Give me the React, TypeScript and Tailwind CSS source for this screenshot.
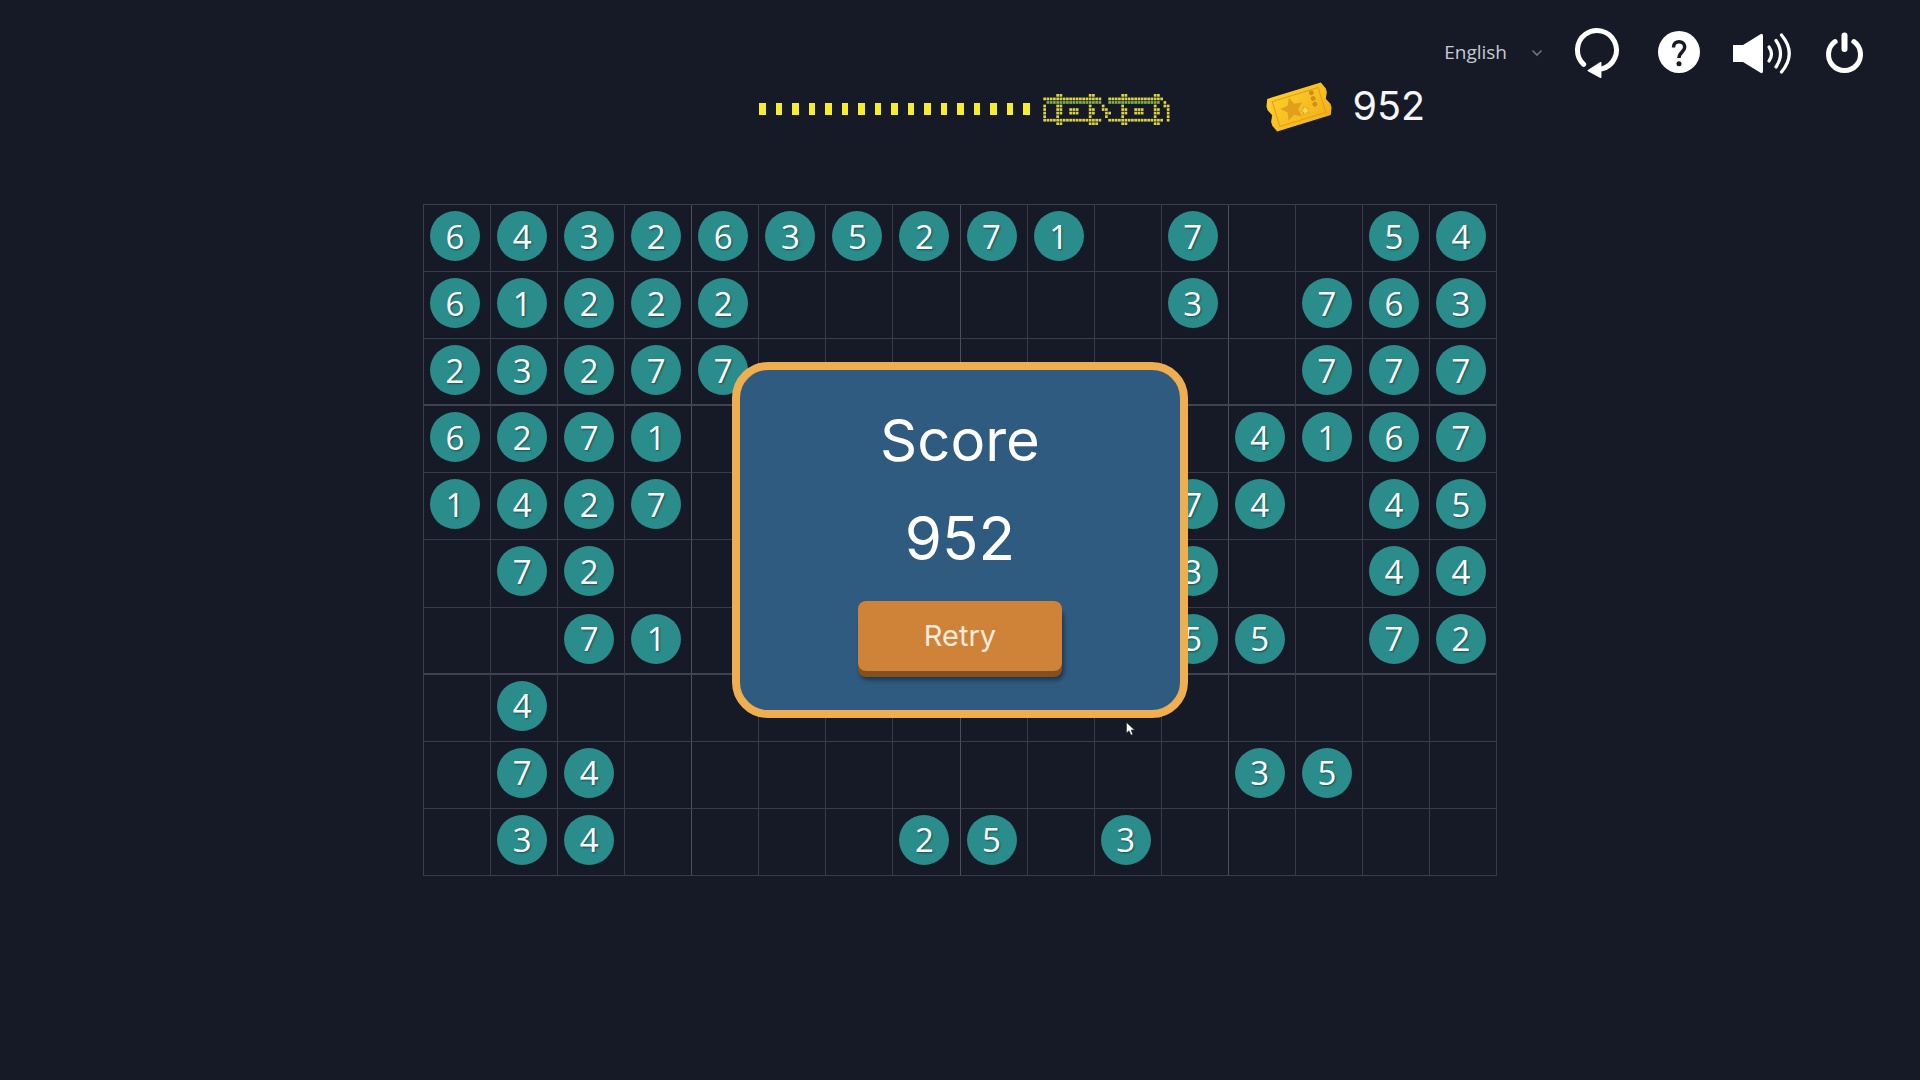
const board = [
  '6432635271x7xx54',
  '61222xxxxxx3x763',
  '23277xxxxxxxx777',
  '6271xxxxxxxx4167',
  '1427xxxxxxx74x45',
  'x72xxxxxxxx3xx44',
  'xx71xxxxxxx55x72',
  'x4xxxxxxxxxxxxxx',
  'x74xxxxxxxxx35xx',
  'x34xxxx25x3xxxxx',
];

const dotRows = [
  '....##........##........##........##...',
  '##################..#################..',
  '.ggggggggggggggggg..gggggggggggggggg.#.',
  '#...##........#...#.....#.........#..##',
  '#...##..###...##..##....##..###...##..#',
  '#...##..###...##...##...##..###...##..#',
  '#...#.........#....#....#.........#...#',
  '##################..#################.#',
  '....##........###.......##........##...',
];

function DotBadge() {
  return (
    <svg width="128" height="32" viewBox="0 0 128 32" className="ml-[13px]">
      {dotRows.map((row, y) =>
        row.split('').map((c, x) =>
          c === '.' ? null : (
            <rect
              key={`${x}-${y}`}
              x={x * 3.25 + 0.3}
              y={y * 3.55 + 1}
              width="2.7"
              height="2.7"
              fill={c === 'g' ? '#7fb050' : '#dcd540'}
            />
          ),
        ),
      )}
    </svg>
  );
}

function Ticket() {
  return (
    <svg width="70" height="50" viewBox="0 0 70 50">
      <defs>
        <linearGradient id="tk" x1="0" y1="0" x2="1" y2="1">
          <stop offset="0" stopColor="#fdd02c" />
          <stop offset="1" stopColor="#f3b01a" />
        </linearGradient>
      </defs>
      <g transform="rotate(-17 35 25)">
        <path d="M7 8H63L66 15V19L63 25L66 31V35L63 42H7L4 35V31L7 25L4 19V15Z" fill="url(#tk)" />
        <path d="M11 12H59V38H11Z" fill="none" stroke="#e3a31a" strokeWidth="1.2" />
        <path
          d="M28 13L31.5 20.5L39.5 21.5L33.5 27L35 35L28 31L21 35L22.5 27L16.5 21.5L24.5 20.5Z"
          fill="#e0a01e"
        />
        <path d="M40 25.5L41.5 28.5L44.5 29L42.3 31L43 34L40 32.5L37 34L37.7 31L35.5 29L38.5 28.5Z" fill="#ffd95f" stroke="#e3a31a" strokeWidth="0.8" />
        <circle cx="51" cy="15" r="2.4" fill="#cf8f15" />
        <circle cx="51" cy="21" r="2.4" fill="#cf8f15" />
        <circle cx="51" cy="27" r="2.4" fill="#cf8f15" />
      </g>
    </svg>
  );
}

function RestartIcon() {
  return (
    <svg width="48" height="52" viewBox="0 0 48 52" fill="none">
      <path d="M10.7 38.3A19.5 19.5 0 1 1 29 42.85" stroke="#fff" strokeWidth="5" strokeLinecap="round" />
      <path d="M15.3 44.7L27.7 36.7V51.3Z" fill="#fff" stroke="#fff" strokeWidth="1.5" strokeLinejoin="round" />
    </svg>
  );
}

function HelpIcon() {
  return (
    <svg width="48" height="52" viewBox="0 0 48 52" fill="none">
      <circle cx="24" cy="26" r="21" fill="#fff" />
      <path
        d="M18.5 21.5C18.5 17.5 21 15.7 24 15.7C27.5 15.7 29.7 18 29.7 21C29.7 26 24 26 24 32"
        stroke="#161a26"
        strokeWidth="3.5"
      />
      <circle cx="24" cy="37.8" r="2.5" fill="#161a26" />
    </svg>
  );
}

function SoundIcon() {
  return (
    <svg width="62" height="52" viewBox="0 0 62 52" fill="none">
      <path d="M2 19H12L29.5 8.2Q32 7 32 10V45Q32 48 29.5 46.8L12 36H2Z" fill="#fff" />
      <path d="M38 21Q43 28 38 35" stroke="#fff" strokeWidth="3.2" strokeLinecap="round" />
      <path d="M45 14.5Q54 27.5 45 41" stroke="#fff" strokeWidth="3.2" strokeLinecap="round" />
      <path d="M50.5 9Q66 27.5 50.5 46" stroke="#fff" strokeWidth="3.2" strokeLinecap="round" />
    </svg>
  );
}

function PowerIcon() {
  return (
    <svg width="48" height="52" viewBox="0 0 48 52" fill="none">
      <path d="M15.1 15.6A16 16 0 1 0 33.9 15.6" stroke="#fff" strokeWidth="5" strokeLinecap="round" />
      <path d="M24.5 9.5V23" stroke="#fff" strokeWidth="6" strokeLinecap="round" />
    </svg>
  );
}

export default function App() {
  return (
    <div className="h-screen overflow-hidden bg-[#161a26] pt-[26px] font-['Inter',sans-serif] text-white">
      <div className="flex h-[52px] items-center justify-end pr-[52px]">
        <div className="mr-[30px] flex items-center font-['Open_Sans',sans-serif] text-[19px] text-[#c7cad1]">
          <span>English</span>
          <svg width="12" height="8" viewBox="0 0 12 8" fill="none" className="ml-[24px] mt-[1px]">
            <path d="M1.5 1.5L6 6L10.5 1.5" stroke="#6f7380" strokeWidth="1.6" />
          </svg>
        </div>
        <RestartIcon />
        <div className="ml-[34px]">
          <HelpIcon />
        </div>
        <div className="ml-[28px]">
          <SoundIcon />
        </div>
        <div className="ml-[27px]">
          <PowerIcon />
        </div>
      </div>

      <div className="mt-[4px] flex h-[50px] items-center pl-[759px]">
        <div className="mt-[4px] flex items-center">
          <div className="flex gap-[10px]">
            {Array.from({ length: 17 }).map((_, i) => (
              <div key={i} className="h-[12px] w-[6.5px] bg-[#f7ec2e]" />
            ))}
          </div>
          <DotBadge />
        </div>
        <div className="ml-[93px]">
          <Ticket />
        </div>
        <span className="ml-[19px] text-[39.5px] leading-none text-[#f4f5f7]">952</span>
      </div>

      <div className="relative mx-auto mt-[72px] w-[1074px]">
        <div className="grid h-[672px] grid-cols-16 grid-rows-10 border-l border-t border-[#3a3d4b]">
          {board.map((row, y) =>
            row.split('').map((n, x) => (
              <div
                key={`${x}-${y}`}
                className={`flex items-start pl-[6px] pt-[6px] ${(x + 1) % 4 === 0 && x < 15 ? 'border-r border-r-[#4c4f5e]' : 'border-r border-r-[#383b4a]'} ${y === 2 || y === 6 ? 'border-b-2 border-b-[#3f4251]' : 'border-b border-b-[#383b4a]'}`}
              >
                {n !== 'x' && (
                  <div className="flex h-[50px] w-[50px] items-center justify-center rounded-full bg-[#2a8d8b] font-['Open_Sans',sans-serif] text-[33px] font-medium leading-none [text-shadow:1px_1px_2px_rgba(0,0,0,0.45)]">
                    {n}
                  </div>
                )}
              </div>
            )),
          )}
        </div>

        <div className="absolute left-[309px] top-[158px] flex h-[356px] w-[456px] flex-col items-center rounded-[36px] border-8 border-[#efae50] bg-[#2f5b80]">
          <div className="mt-[34px] text-[58px] leading-[72px]">Score</div>
          <div className="mt-[26px] text-[60px] leading-[72px]">952</div>
          <button className="mt-[27px] h-[70px] w-[204px] rounded-lg bg-[#cf8339] text-[29px] text-[#f6eadc] shadow-[0_6px_0_#84501c,2px_9px_4px_rgba(0,0,0,0.4)]">
            Retry
          </button>
        </div>

        <svg width="10" height="14" viewBox="0 0 10 14" className="absolute left-[703px] top-[518px]">
          <path d="M0.5 0.5V11L3 8.7L5 13L6.8 12.2L5 8H8.5Z" fill="#fff" stroke="#222" strokeWidth="0.5" />
        </svg>
      </div>
    </div>
  );
}
